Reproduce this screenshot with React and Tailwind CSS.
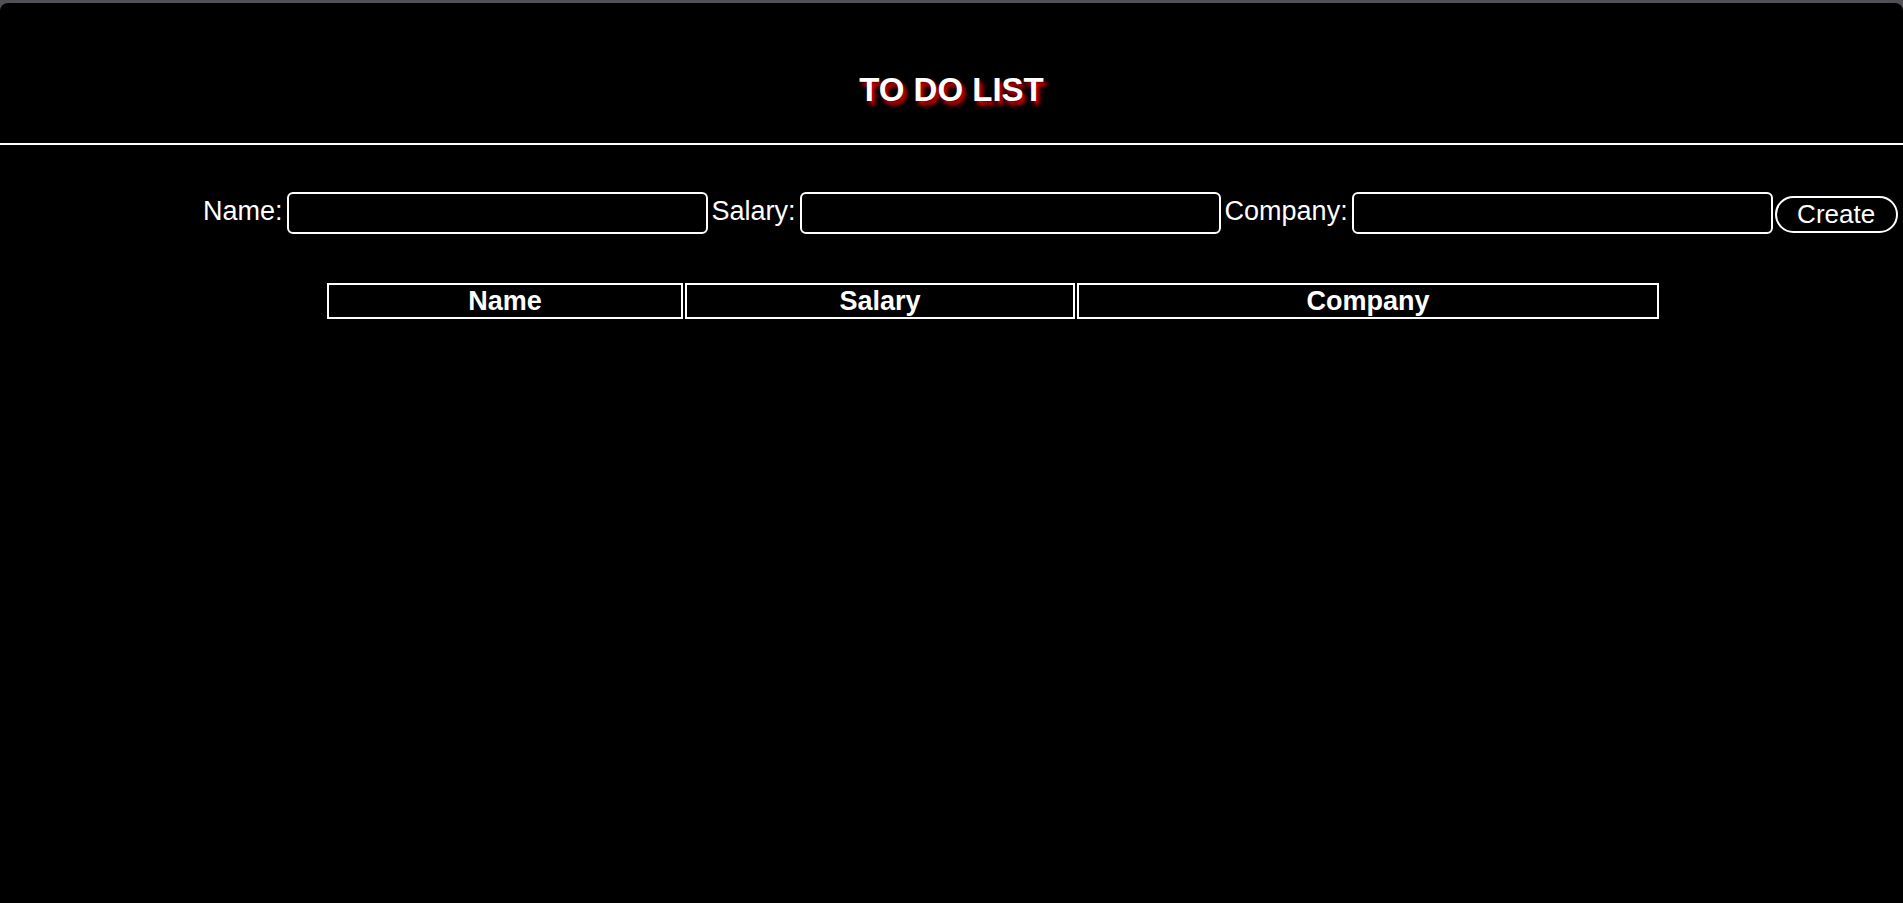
import React, { useState } from "react";

const Field = ({ label, value, onChange }) => (
  <>
    <label className="pb-[3px]">{label}</label>
    <input
      value={value}
      onChange={(e) => onChange(e.target.value)}
      className="w-[421px] h-[42px] border-2 border-white rounded-[6px] bg-black text-white px-2 outline-none"
    />
  </>
);

const App = () => {
  const [name, setName] = useState("");
  const [salary, setSalary] = useState("");
  const [company, setCompany] = useState("");

  return (
    <div className="bg-[#505157] pt-[3px] min-h-screen font-['Liberation_Sans',Arial,sans-serif] text-white">
      <div className="bg-black rounded-t-[8px] min-h-[900px]">
        <h1 className="pt-[68px] text-center text-[33px] font-bold leading-[37px] [text-shadow:3px_4px_4px_#f00000]">
          TO DO LIST
        </h1>
        <div className="mt-[35px] h-[2px] bg-white" />

        <div className="mt-[47px] pl-[203px] flex items-center gap-[4px] text-[27px] leading-[31px]">
          <Field label="Name:" value={name} onChange={setName} />
          <Field label="Salary:" value={salary} onChange={setSalary} />
          <Field label="Company:" value={company} onChange={setCompany} />
          <button className="ml-[-2px] w-[123px] h-[37px] mt-[3px] border-2 border-white rounded-full flex items-center justify-center text-[26px]">
            Create
          </button>
        </div>

        <div className="mt-[47px] pl-[325px]">
          <table className="border-separate border-spacing-[2px] text-[27px] leading-[30px]">
            <thead>
              <tr>
                <th className="w-[356px] border-2 border-white p-[1px] font-bold">Name</th>
                <th className="w-[390px] border-2 border-white p-[1px] font-bold">Salary</th>
                <th className="w-[582px] border-2 border-white p-[1px] font-bold">Company</th>
              </tr>
            </thead>
            <tbody />
          </table>
        </div>
      </div>
    </div>
  );
};

export default App;
